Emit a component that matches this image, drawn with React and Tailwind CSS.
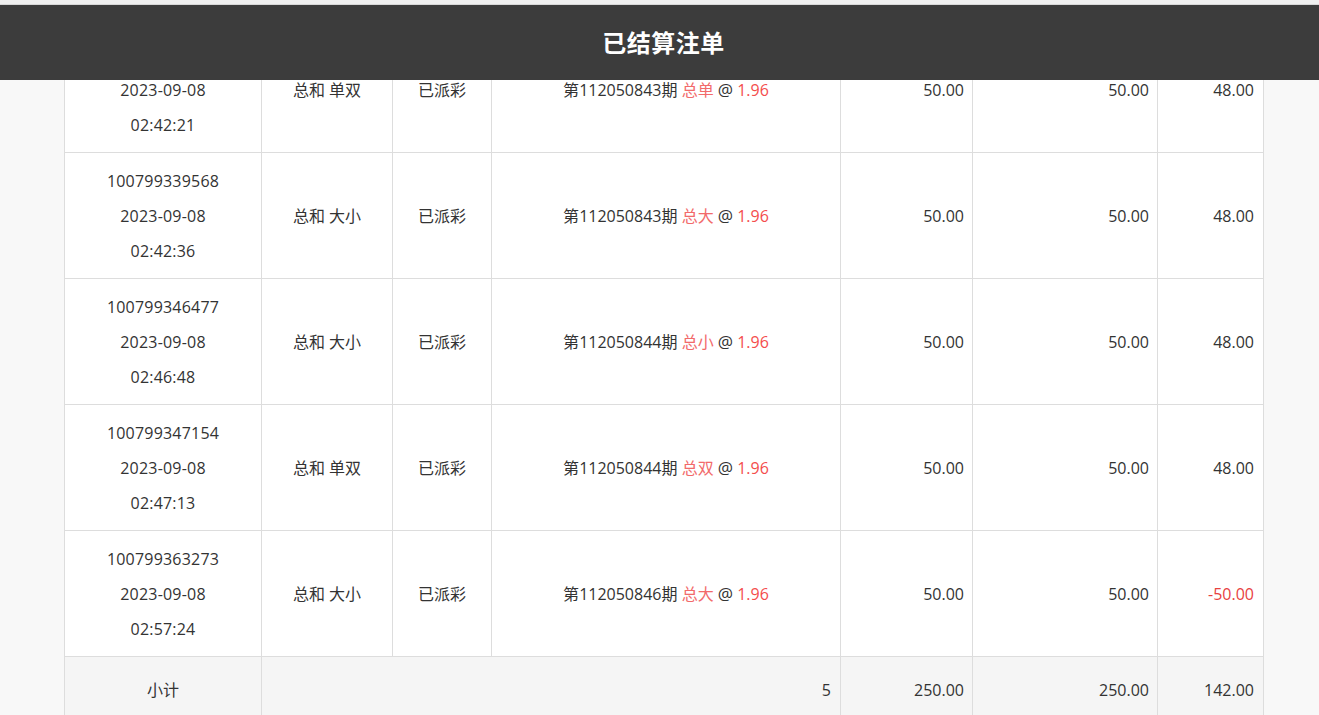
import React from "react";

const rows = [
  { id: "100799332817", date: "2023-09-08", time: "02:42:21", play: "总和 单双", issue: "112050843", pick: "总单", win: "48.00" },
  { id: "100799339568", date: "2023-09-08", time: "02:42:36", play: "总和 大小", issue: "112050843", pick: "总大", win: "48.00" },
  { id: "100799346477", date: "2023-09-08", time: "02:46:48", play: "总和 大小", issue: "112050844", pick: "总小", win: "48.00" },
  { id: "100799347154", date: "2023-09-08", time: "02:47:13", play: "总和 单双", issue: "112050844", pick: "总双", win: "48.00" },
  { id: "100799363273", date: "2023-09-08", time: "02:57:24", play: "总和 大小", issue: "112050846", pick: "总大", win: "-50.00" },
];

function App() {
  return (
    <div className="h-[715px] overflow-hidden bg-[#f8f8f8] font-['Open_Sans','Noto_Sans_CJK_SC',sans-serif] text-[16px] leading-[35px] text-[#333]">
      <div className="h-[5px] bg-[#f0f0f0] border-b border-[#d8d8d8]"></div>
      <header className="relative z-10 h-[75px] bg-[#3c3c3c] flex items-center justify-center pl-[8px] text-white text-[24px] font-bold tracking-[0.5px]">
        已结算注单
      </header>
      <div className="overflow-hidden">
        <table className="ml-[64px] -mt-[54px] w-[1200px] table-fixed border-collapse bg-white">
          <colgroup>
            <col className="w-[197px]" />
            <col className="w-[131px]" />
            <col className="w-[99px]" />
            <col className="w-[349px]" />
            <col className="w-[132px]" />
            <col className="w-[185px]" />
            <col className="w-[106px]" />
          </colgroup>
          <tbody>
            {rows.map((r) => (
              <tr key={r.id} className="h-[126px]">
                <td className="border border-[#dddddd] pt-[11px] pb-[9px] text-center align-middle tracking-[0.2px]">
                  <div>{r.id}</div>
                  <div>{r.date}</div>
                  <div>{r.time}</div>
                </td>
                <td className="border border-[#dddddd] pt-[1px] text-center align-middle">{r.play}</td>
                <td className="border border-[#dddddd] pt-[1px] text-center align-middle">已派彩</td>
                <td className="border border-[#dddddd] pt-[1px] text-center align-middle">
                  第{r.issue}期 <span className="text-[#f26a6a]">{r.pick}</span> <span className="text-[17px]">@</span> <span className="text-[#f44d4d]">1.96</span>
                </td>
                <td className="border border-[#dddddd] pt-[1px] pr-[8px] text-right align-middle">50.00</td>
                <td className="border border-[#dddddd] pt-[1px] pr-[8px] text-right align-middle">50.00</td>
                <td className={"border border-[#dddddd] pt-[1px] pr-[9px] text-right align-middle " + (r.win.startsWith("-") ? "text-[#e8413f]" : "")}>
                  {r.win}
                </td>
              </tr>
            ))}
            <tr className="bg-[#f5f5f5]">
              <td className="border border-[#dddddd] pt-[16px] pb-[14px] text-center">小计</td>
              <td colSpan={3} className="border border-[#dddddd] pt-[2px] pr-[9px] text-right">5</td>
              <td className="border border-[#dddddd] pt-[2px] pr-[8px] text-right">250.00</td>
              <td className="border border-[#dddddd] pt-[2px] pr-[8px] text-right">250.00</td>
              <td className="border border-[#dddddd] pt-[2px] pr-[9px] text-right">142.00</td>
            </tr>
          </tbody>
        </table>
      </div>
    </div>
  );
}

export default App;
